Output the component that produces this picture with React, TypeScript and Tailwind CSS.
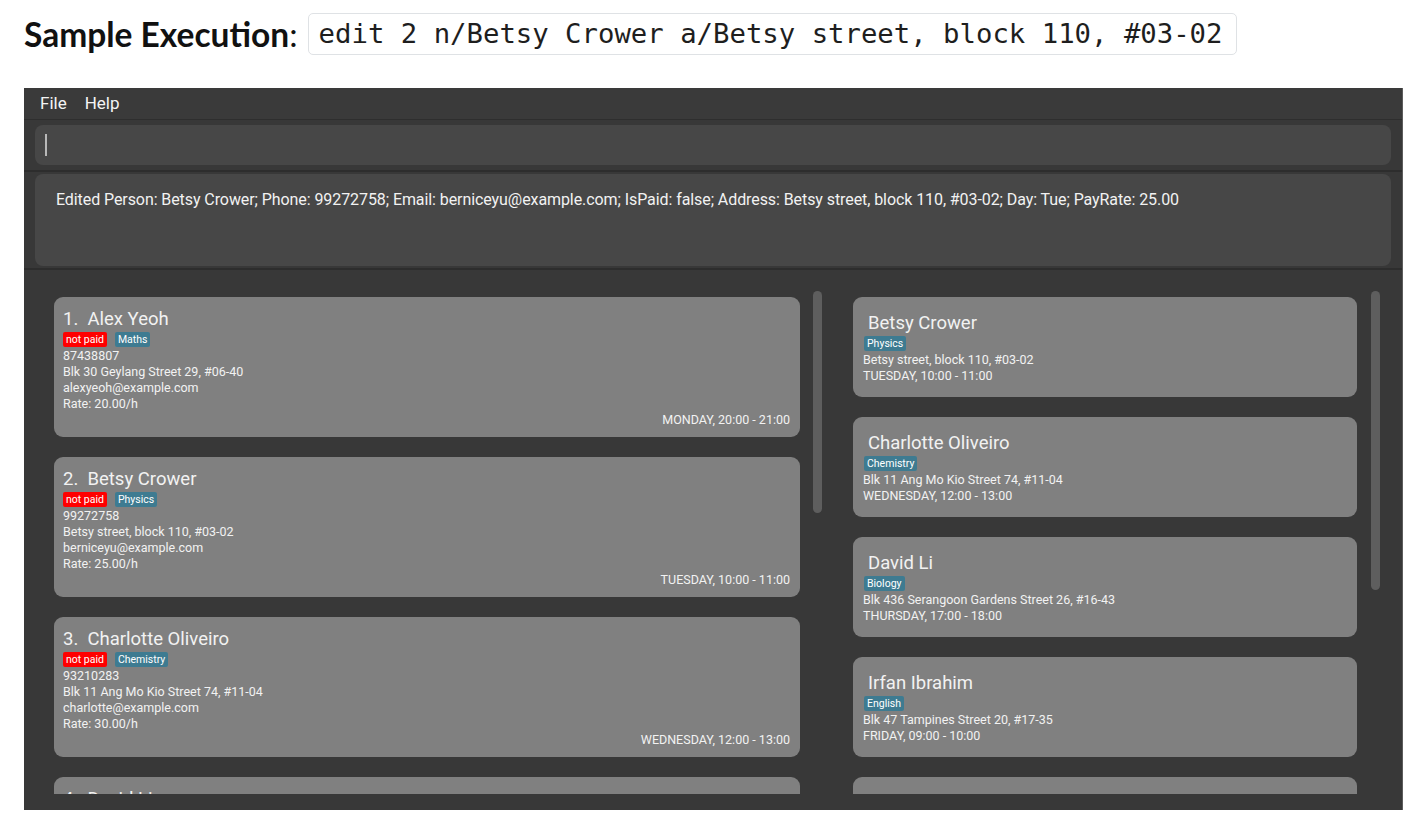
import React from "react";

type Student = {
  name: string;
  phone: string;
  address: string;
  email: string;
  rate: string;
  subject: string;
  day: string;
};

const students: Student[] = [
  {
    name: "Alex Yeoh",
    phone: "87438807",
    address: "Blk 30 Geylang Street 29, #06-40",
    email: "alexyeoh@example.com",
    rate: "20.00",
    subject: "Maths",
    day: "MONDAY, 20:00 - 21:00",
  },
  {
    name: "Betsy Crower",
    phone: "99272758",
    address: "Betsy street, block 110, #03-02",
    email: "berniceyu@example.com",
    rate: "25.00",
    subject: "Physics",
    day: "TUESDAY, 10:00 - 11:00",
  },
  {
    name: "Charlotte Oliveiro",
    phone: "93210283",
    address: "Blk 11 Ang Mo Kio Street 74, #11-04",
    email: "charlotte@example.com",
    rate: "30.00",
    subject: "Chemistry",
    day: "WEDNESDAY, 12:00 - 13:00",
  },
  {
    name: "David Li",
    phone: "91031282",
    address: "Blk 436 Serangoon Gardens Street 26, #16-43",
    email: "lidavid@example.com",
    rate: "35.00",
    subject: "Biology",
    day: "THURSDAY, 17:00 - 18:00",
  },
];

// schedule on the right, in day order
const schedule = [
  { name: "Betsy Crower", subject: "Physics", address: "Betsy street, block 110, #03-02", day: "TUESDAY, 10:00 - 11:00" },
  { name: "Charlotte Oliveiro", subject: "Chemistry", address: "Blk 11 Ang Mo Kio Street 74, #11-04", day: "WEDNESDAY, 12:00 - 13:00" },
  { name: "David Li", subject: "Biology", address: "Blk 436 Serangoon Gardens Street 26, #16-43", day: "THURSDAY, 17:00 - 18:00" },
  { name: "Irfan Ibrahim", subject: "English", address: "Blk 47 Tampines Street 20, #17-35", day: "FRIDAY, 09:00 - 10:00" },
  { name: "Roy Balakrishnan", subject: "History", address: "Blk 45 Aljunied Street 85, #11-31", day: "SATURDAY, 14:00 - 15:00" },
];

function Tag({ text, red }: { text: string; red?: boolean }) {
  return (
    <span
      className={`inline-block h-[15px] rounded-[2px] px-[3px] text-[10.5px] leading-[15px] text-white ${
        red ? "bg-[#ff0000]" : "bg-[#3e7b91]"
      }`}
    >
      {text}
    </span>
  );
}

function StudentCard({ s, index }: { s: Student; index: number }) {
  return (
    <div className="flex h-[140px] w-[746px] shrink-0 flex-col rounded-[9px] bg-[#808080] pb-[9px] pl-[9px] pr-[10px] pt-[12px] text-[#f2f2f2]">
      <div className="text-[18.5px] leading-[21px]">
        {index}.&nbsp;&nbsp;{s.name}
      </div>
      <div className="mt-[2px] flex gap-[8px]">
        <Tag text="not paid" red />
        <Tag text={s.subject} />
      </div>
      <div className="mt-[1px] text-[12.5px] leading-[16px]">
        <div>{s.phone}</div>
        <div>{s.address}</div>
        <div>{s.email}</div>
        <div>Rate: {s.rate}/h</div>
      </div>
      <div className="flex-1" />
      <div className="text-right text-[12.5px] leading-[16px]">{s.day}</div>
    </div>
  );
}

function ScheduleCard({ name, subject, address, day }: { name: string; subject: string; address: string; day: string }) {
  return (
    <div className="flex h-[100px] w-[504px] shrink-0 flex-col rounded-[9px] bg-[#808080] pl-[10px] pt-[16px] text-[#f2f2f2]">
      <div className="pl-[5px] text-[18.5px] leading-[21px]">{name}</div>
      <div className="mt-[2px] flex pl-[1px]">
        <Tag text={subject} />
      </div>
      <div className="mt-[1px] text-[12.5px] leading-[16px]">
        <div>{address}</div>
        <div>{day}</div>
      </div>
    </div>
  );
}

export default function App() {
  return (
    <div className="min-h-screen bg-white font-['Roboto',sans-serif]">
      <div className="flex items-center pl-[24px] pt-[13px]">
        <span className="font-['Lato',sans-serif] text-[33.5px] font-bold leading-[42px] text-[#111]">Sample Execution</span>
        <span className="font-['Lato',sans-serif] text-[33.5px] leading-[42px] text-[#111]">:</span>
        <span className="ml-[10px] flex h-[42px] w-[929px] items-center rounded-[5px] border border-[#dfe2e5] pl-[10px] font-['DejaVu_Sans_Mono',monospace] text-[27.3px] text-[#1e1e1e]">
          edit 2 n/Betsy Crower a/Betsy street, block 110, #03-02
        </span>
      </div>

      <div className="ml-[24px] mt-[33px] flex h-[722px] w-[1379px] flex-col overflow-hidden border-r border-[#5c5c5c] bg-[#383838]">
        {/* menu bar */}
        <div className="flex h-[31px] shrink-0 items-center gap-[18px] bg-[#3a3a3a] pl-[16px] text-[17px] text-[#f4f4f4]">
          <span>File</span>
          <span>Help</span>
        </div>
        <div className="h-[1px] shrink-0 bg-[#2e2e2e]" />

        {/* command box */}
        <div className="shrink-0 px-[11px] pb-[5px] pt-[5px]">
          <div className="flex h-[40px] items-center rounded-[8px] bg-[#474747] pl-[10px]">
            <div className="h-[22px] w-[2px] bg-[#b8b8b8]" />
          </div>
        </div>
        <div className="h-[2px] shrink-0 bg-[#2d2d2d]" />

        {/* result display */}
        <div className="shrink-0 px-[11px] py-[2px]">
          <div className="h-[92px] rounded-[8px] bg-[#474747] pl-[21px] pt-[15px] text-[16px] leading-[22px] tracking-[-0.08px] text-[#f2f2f2]">
            Edited Person: Betsy Crower; Phone: 99272758; Email: berniceyu@example.com; IsPaid: false; Address: Betsy street, block 110, #03-02; Day: Tue; PayRate: 25.00
          </div>
        </div>
        <div className="h-[2px] shrink-0 bg-[#2d2d2d]" />

        {/* lists */}
        <div className="flex h-[524px] shrink-0 overflow-hidden">
          <div className="flex pl-[30px] pt-[21px]">
            <div className="flex flex-col gap-[20px] pt-[6px]">
              {students.map((s, i) => (
                <StudentCard key={s.name} s={s} index={i + 1} />
              ))}
            </div>
            <div className="ml-[13px] h-[222px] w-[9px] shrink-0 rounded-full bg-[#5e5e5e]" />
          </div>
          <div className="ml-[31px] flex pt-[21px]">
            <div className="flex flex-col gap-[20px] pt-[6px]">
              {schedule.map((c) => (
                <ScheduleCard key={c.name} {...c} />
              ))}
            </div>
            <div className="ml-[14px] h-[299px] w-[9px] shrink-0 rounded-full bg-[#5e5e5e]" />
          </div>
        </div>
      </div>
    </div>
  );
}
